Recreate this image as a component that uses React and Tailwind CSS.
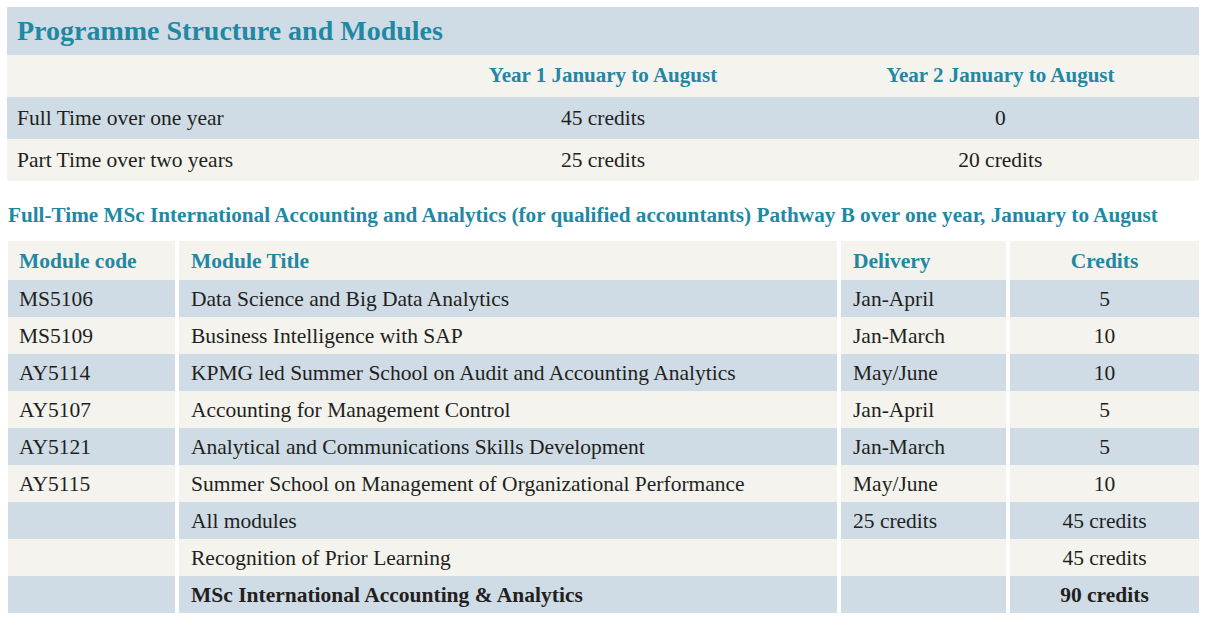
const blue = 'bg-[#cfdce6]';
const cream = 'bg-[#f4f3ee]';

const modules = [
  ['MS5106', 'Data Science and Big Data Analytics', 'Jan-April', '5'],
  ['MS5109', 'Business Intelligence with SAP', 'Jan-March', '10'],
  ['AY5114', 'KPMG led Summer School on Audit and Accounting Analytics', 'May/June', '10'],
  ['AY5107', 'Accounting for Management Control', 'Jan-April', '5'],
  ['AY5121', 'Analytical and Communications Skills Development', 'Jan-March', '5'],
  ['AY5115', 'Summer School on Management of Organizational Performance', 'May/June', '10'],
  ['', 'All modules', '25 credits', '45 credits'],
  ['', 'Recognition of Prior Learning', '', '45 credits'],
  ['', 'MSc International Accounting & Analytics', '', '90 credits', true],
];

const App = () => {
  return (
    <div className="min-h-screen bg-white pt-[7px] px-[7px] text-[#231f20] font-['Liberation_Serif',serif]">
      {/* programme structure */}
      <div className="w-[1192px]">
        <div className={`${blue} h-[48px] flex items-center pl-[10px]`}>
          <h1 className="text-[28px] font-bold text-[#1f88a3] leading-none">Programme Structure and Modules</h1>
        </div>
        <div className={`${cream} h-[42px] grid grid-cols-3 items-center text-[21px] font-bold text-[#1f88a3]`}>
          <div></div>
          <div className="text-center">Year 1 January to August</div>
          <div className="text-center">Year 2 January to August</div>
        </div>
        <div className={`${blue} h-[42px] grid grid-cols-3 items-center text-[21.5px]`}>
          <div className="pl-[10px]">Full Time over one year</div>
          <div className="text-center">45 credits</div>
          <div className="text-center">0</div>
        </div>
        <div className={`${cream} h-[42px] grid grid-cols-3 items-center text-[21.5px]`}>
          <div className="pl-[10px]">Part Time over two years</div>
          <div className="text-center">25 credits</div>
          <div className="text-center">20 credits</div>
        </div>
      </div>

      <h2 className="mt-[24px] pl-[1px] text-[21.2px] font-bold text-[#1f88a3] leading-none whitespace-nowrap">
        Full-Time MSc International Accounting and Analytics (for qualified accountants) Pathway B over one year, January to August
      </h2>

      {/* modules table */}
      <div className="mt-[15px] ml-[1px] w-[1191px] grid grid-cols-[167px_658px_165px_189px] gap-x-[4px] text-[21.5px]">
        <div className={`${cream} h-[39px] flex items-center pl-[11px] font-bold text-[#1f88a3]`}>Module code</div>
        <div className={`${cream} h-[39px] flex items-center pl-[12px] font-bold text-[#1f88a3]`}>Module Title</div>
        <div className={`${cream} h-[39px] flex items-center pl-[12px] font-bold text-[#1f88a3]`}>Delivery</div>
        <div className={`${cream} h-[39px] flex items-center justify-center font-bold text-[#1f88a3]`}>Credits</div>
        {modules.map(([code, title, delivery, credits, bold], i) => {
          const bg = i % 2 === 0 ? blue : cream;
          return [
            <div key={`a${i}`} className={`${bg} h-[37px] flex items-center pl-[11px]`}>{code}</div>,
            <div key={`b${i}`} className={`${bg} h-[37px] flex items-center pl-[12px] ${bold ? 'font-bold' : ''}`}>{title}</div>,
            <div key={`c${i}`} className={`${bg} h-[37px] flex items-center pl-[12px]`}>{delivery}</div>,
            <div key={`d${i}`} className={`${bg} h-[37px] flex items-center justify-center ${bold ? 'font-bold' : ''}`}>{credits}</div>,
          ];
        })}
      </div>
    </div>
  );
};

export default App;
